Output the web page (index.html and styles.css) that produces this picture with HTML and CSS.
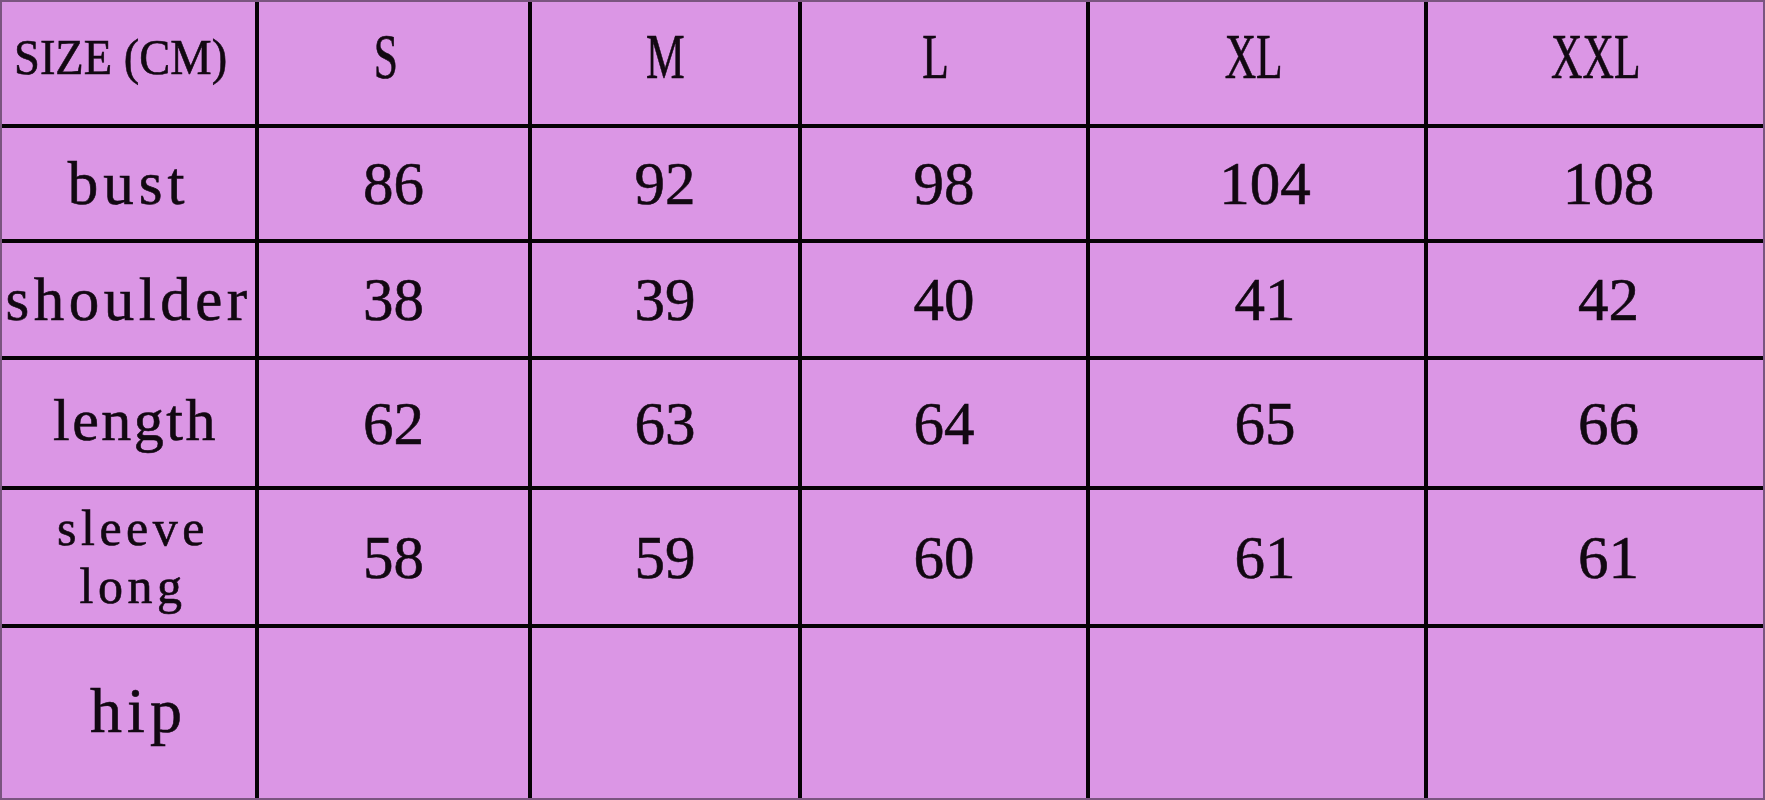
FILE: index.html
```html
<!DOCTYPE html>
<html lang="en">
<head>
<meta charset="utf-8">
<title>Size chart</title>
<link rel="stylesheet" href="styles.css">
</head>
<body>
<div class="chart">
  <div class="cell head first"><span class="head-label">SIZE (CM)</span></div>
  <div class="cell head s"><span class="cap">S</span></div>
  <div class="cell head m"><span class="cap">M</span></div>
  <div class="cell head l"><span class="cap">L</span></div>
  <div class="cell head xl"><span class="cap">XL</span></div>
  <div class="cell head xxl"><span class="cap">XXL</span></div>

  <div class="cell"><span class="label bust">bust</span></div>
  <div class="cell num">86</div>
  <div class="cell num">92</div>
  <div class="cell num">98</div>
  <div class="cell num xl">104</div>
  <div class="cell num xxl">108</div>

  <div class="cell"><span class="label shoulder">shoulder</span></div>
  <div class="cell num">38</div>
  <div class="cell num">39</div>
  <div class="cell num">40</div>
  <div class="cell num xl">41</div>
  <div class="cell num xxl">42</div>

  <div class="cell"><span class="label length">length</span></div>
  <div class="cell num">62</div>
  <div class="cell num">63</div>
  <div class="cell num">64</div>
  <div class="cell num xl">65</div>
  <div class="cell num xxl">66</div>

  <div class="cell"><span class="label sleeve">sleeve<br>long</span></div>
  <div class="cell num">58</div>
  <div class="cell num">59</div>
  <div class="cell num">60</div>
  <div class="cell num xl">61</div>
  <div class="cell num xxl">61</div>

  <div class="cell"><span class="label hip">hip</span></div>
  <div class="cell"></div>
  <div class="cell"></div>
  <div class="cell"></div>
  <div class="cell"></div>
  <div class="cell"></div>
</div>
</body>
</html>
```

FILE: styles.css
```css
html, body {
  margin: 0;
  padding: 0;
  background: #db96e5;
}

.chart {
  box-sizing: border-box;
  width: 1765px;
  height: 800px;
  border: 2px solid #7a5580;
  background: #050205;
  display: grid;
  grid-template-columns: 253px 269px 266px 284px 334px 1fr;
  grid-template-rows: 122px 111px 113px 126px 134px 1fr;
  gap: 4px;
  font-family: "Liberation Serif", "Times New Roman", serif;
  color: #120812;
  -webkit-text-stroke: 0.6px #120812;
}

.cell {
  box-sizing: border-box;
  background: #db96e5;
  display: flex;
  align-items: center;
  justify-content: center;
  line-height: 1;
}

.head {
  padding-bottom: 12px;
}

.head.first {
  padding-right: 16px;
}

.head.s,
.head.l {
  padding-right: 16px;
}

.head.xl {
  padding-right: 6px;
}

.num {
  font-size: 61px;
}

.num.xl {
  padding-left: 16px;
}

.num.xxl {
  padding-left: 26px;
}

.cap {
  display: inline-block;
  font-size: 64px;
  transform: scaleX(0.68);
}

.head-label {
  display: inline-block;
  font-size: 50px;
  transform: scaleX(0.93);
  white-space: nowrap;
}

.label {
  display: inline-block;
  text-align: center;
  white-space: nowrap;
}

.bust {
  font-size: 61px;
  letter-spacing: 5px;
}

.shoulder {
  font-size: 61px;
  letter-spacing: 4.5px;
}

.length {
  font-size: 60px;
  letter-spacing: 2.5px;
  padding-left: 14px;
  margin-bottom: 6px;
}

.sleeve {
  font-size: 50px;
  line-height: 58px;
  letter-spacing: 4.5px;
  padding-left: 9px;
}

.hip {
  font-size: 64px;
  letter-spacing: 5px;
  padding-left: 20px;
  margin-bottom: 4px;
}
```
